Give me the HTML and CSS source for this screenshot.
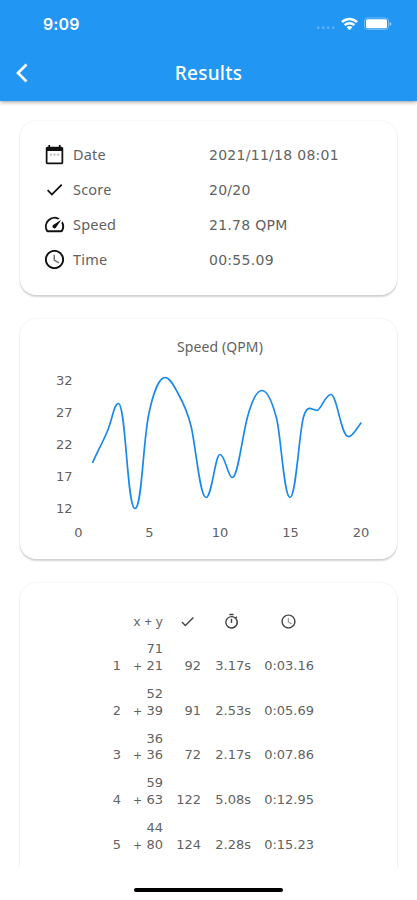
FILE: index.html
```html
<!DOCTYPE html>
<html lang="en">
<head>
<meta charset="utf-8">
<title>Results</title>
<link rel="stylesheet" href="styles.css">
</head>
<body>
<svg width="0" height="0" class="defs">
  <symbol id="check" viewBox="0 0 24 24"><path d="M9 16.17 4.83 12l-1.42 1.41L9 19 21 7l-1.41-1.41z"/></symbol>
  <symbol id="clock" viewBox="0 0 24 24"><path d="M11.99 2C6.47 2 2 6.48 2 12s4.47 10 9.99 10C17.52 22 22 17.52 22 12S17.52 2 11.99 2zM12 20c-4.42 0-8-3.58-8-8s3.58-8 8-8 8 3.58 8 8-3.58 8-8 8z"/><path d="M12.500 7H11v6l5.250 3.150.75-1.230-4.500-2.670z" opacity=".6"/></symbol>
</svg>
<header class="header">
  <div class="status">
    <span class="clock">9:09</span>
    <svg class="status-icons" width="80" height="16" viewBox="0 0 80 16">
      <g fill="#fff" opacity=".3"><rect x="3" y="10.500" width="2.500" height="2.500" rx="1"/><rect x="8" y="10.500" width="2.500" height="2.500" rx="1"/><rect x="13" y="10.500" width="2.500" height="2.500" rx="1"/><rect x="18" y="10.500" width="2.500" height="2.500" rx="1"/></g>
      <g fill="none" stroke="#fff" stroke-width="2.500"><path d="M28 6.200a10.400 10.400 0 0 1 15 0"/><path d="M30.700 9.200a6.800 6.800 0 0 1 9.600 0"/></g>
      <path d="M32.700 11.200a3.800 3.800 0 0 1 5.600 0L35.500 14.200z" fill="#fff"/>
      <rect x="50.500" y="2" width="24" height="11.500" rx="3" fill="none" stroke="#fff" opacity=".35"/>
      <rect x="52" y="3.300" width="21" height="9" rx="1.500" fill="#fff"/>
      <path d="M75.500 6v4q2-.5 2-2t-2-2" fill="#fff" opacity=".5"/>
    </svg>
  </div>
  <div class="bar">
    <svg class="back" width="14" height="22" viewBox="0 0 14 22"><path d="M12.500 2.500 4 11l8.500 8.500" fill="none" stroke="#fff" stroke-width="2.700"/></svg>
    <h1>Results</h1>
  </div>
</header>
<main class="content">
  <section class="card summary">
    <div class="row"><svg viewBox="0 0 24 24"><path d="M20 3h-1V1h-2v2H7V1H5v2H4c-1.100 0-2 .9-2 2v16c0 1.100.9 2 2 2h16c1.100 0 2-.9 2-2V5c0-1.100-.9-2-2-2zm0 18H4V8h16z"/><path d="M7 11h2v2H7zm4 0h2v2h-2zm4 0h2v2h-2z" opacity=".35"/></svg><span>Date</span><b>2021/11/18 08:01</b></div>
    <div class="row"><svg viewBox="0 0 24 24"><use href="#check"/></svg><span>Score</span><b>20/20</b></div>
    <div class="row"><svg viewBox="0 0 24 24" class="wide"><path d="m20.380 8.570-1.230 1.850a8 8 0 0 1-.22 7.580H5.070A8 8 0 0 1 15.580 6.850l1.850-1.230A10 10 0 0 0 3.350 19a2 2 0 0 0 1.720 1h13.850a2 2 0 0 0 1.740-1 10 10 0 0 0-.27-10.440zM10.590 15.410a2 2 0 0 0 2.830 0l5.660-8.490-8.490 5.660a2 2 0 0 0 0 2.830z"/></svg><span>Speed</span><b>21.78 QPM</b></div>
    <div class="row"><svg viewBox="0 0 24 24" class="wide"><use href="#clock"/></svg><span>Time</span><b>00:55.09</b></div>
  </section>
  <section class="card chart">
    <h2>Speed (QPM)</h2>
    <svg width="377" height="190" viewBox="20 360 377 190">
      <g class="axis" text-anchor="end"><text x="72.500" y="385">32</text><text x="72.500" y="417">27</text><text x="72.500" y="449">22</text><text x="72.500" y="481">17</text><text x="72.500" y="513">12</text></g>
      <g class="axis" text-anchor="middle"><text x="78.500" y="537">0</text><text x="149.500" y="537">5</text><text x="220" y="537">10</text><text x="290.500" y="537">15</text><text x="361" y="537">20</text></g>
      <path class="line" d="M92.500 463C98 450 103 442 107 432C112 421 114 403.500 118.300 403.500C126 403.500 127 508.500 135 508.500C142 508.500 143 440 149 413C153 394 159 377.500 165 377.500C170 377.500 174 386 177.500 392.500C183 402 188 413 191.500 428C196 449 200 497.500 206 497.500C212 497.500 215 454.500 220 454.500C225 454.500 228 477.500 232.300 477.500C238 477.500 242 437 247.500 417C251 404 256 390.500 262 390.500C268 390.500 273 405 276.500 418C281 436 284 497.500 290 497.500C296 497.500 299 433 303.500 417C305.500 410 307 408.300 309.500 408.300C312 408.300 314 410.300 317 410.300C321 410.300 325 394.500 331 394.500C337 394.500 341 436.700 348.500 436.700C353 436.700 357 428 361.300 422.500"/>
    </svg>
  </section>
  <section class="card results">
    <div class="table">
      <div class="line-row head"><i></i><span>x + y</span><span><svg viewBox="0 0 24 24"><use href="#check"/></svg></span><span><svg viewBox="0 0 24 24"><path d="M9 1h6v2H9zM11 8h2v6h-2zM19 7.400l1.400-1.400L19 4.600 17.500 6A9 9 0 1 0 19 7.400zM12 20a7 7 0 1 1 0-14 7 7 0 0 1 0 14z"/></svg></span><span><svg viewBox="0 0 24 24"><use href="#clock"/></svg></span></div>
      <div class="line-row"><i>1</i><span>71<br><em>+</em> 21</span><span>92</span><span>3.17s</span><span>0:03.16</span></div>
      <div class="line-row"><i>2</i><span>52<br><em>+</em> 39</span><span>91</span><span>2.53s</span><span>0:05.69</span></div>
      <div class="line-row"><i>3</i><span>36<br><em>+</em> 36</span><span>72</span><span>2.17s</span><span>0:07.86</span></div>
      <div class="line-row"><i>4</i><span>59<br><em>+</em> 63</span><span>122</span><span>5.08s</span><span>0:12.95</span></div>
      <div class="line-row"><i>5</i><span>44<br><em>+</em> 80</span><span>124</span><span>2.28s</span><span>0:15.23</span></div>
    </div>
  </section>
</main>
<footer class="home"><div></div></footer>
</body>
</html>
```
FILE: styles.css
```css
* { box-sizing: border-box; }
body { margin: 0; width: 417px; height: 900px; overflow: hidden; display: flex; flex-direction: column; background: #fff; color: #626262; font: 13px/16.500px "DejaVu Sans", sans-serif; }
.defs { display: none; }
.header { flex: none; height: 100.500px; background: #2196f3; color: #fff; box-shadow: 0 1px 4px rgba(0,0,0,.42); z-index: 1; }
.status { height: 46px; display: flex; justify-content: space-between; align-items: center; padding: 2px 23px 0 43px; }
.clock { font: 600 16px/20px Inter, sans-serif; letter-spacing: .1px; }
.bar { height: 54px; display: grid; grid-template-columns: 60px 1fr 60px; align-items: center; }
.back { margin-left: 14px; }
h1 { margin: 0; text-align: center; font: 500 19px/24px "Noto Sans", sans-serif; letter-spacing: .25px; }
.content { flex: none; height: 766.500px; overflow: hidden; padding: 20.500px 20px 0; display: flex; flex-direction: column; gap: 24px; }
.card { flex: none; border-radius: 16px; background: #fff; box-shadow: 0 2px 1.500px rgba(0,0,0,.16), 0 0 2px rgba(0,0,0,.1); }
.summary { height: 174px; padding: 16px 24px; }
.row { height: 35px; display: grid; grid-template-columns: 29px 136px 1fr; align-items: center; }
.row svg { width: 21px; height: 21px; fill: #111; }
.row .wide { width: 23px; height: 23px; margin-left: -1px; }
.row span { font: 14.500px/18px "Noto Sans", sans-serif; letter-spacing: .2px; padding-bottom: 1.500px; }
.row b { font-weight: 400; font-size: 14px; letter-spacing: .28px; padding-top: 1px; }
.chart { height: 240px; padding-top: 19px; }
h2 { margin: 0; text-align: center; font: 14px/18px "Noto Sans", sans-serif; letter-spacing: .1px; padding-left: 23px; }
.chart svg { display: block; margin-top: 4px; }
.axis { fill: #626262; font-size: 13px; }
.line { fill: none; stroke: #1a89ed; stroke-width: 1.700; }
.results { height: 400px; padding: 28px 83px 0 87px; }
.table { display: flex; flex-direction: column; gap: 10.700px; }
.line-row { display: grid; grid-template-columns: 14px 42px 38px 50px 63px; align-items: end; height: 34px; text-align: right; }
.line-row i { font-style: normal; }
.line-row em { font-style: normal; font-size: 11px; line-height: 0; }
.head { height: 20px; margin-bottom: -1.300px; align-items: center; font-family: "Noto Sans", sans-serif; letter-spacing: .35px; }
.head svg { width: 17px; height: 17px; fill: #444; display: block; margin: auto; }
.head span:nth-child(3) svg { margin-right: 5px; }
.head span:nth-child(4) svg { margin-right: 11px; }
.head span:nth-child(5) svg { margin-right: 17px; }
.home { height: 33px; display: flex; justify-content: center; padding-top: 21px; }
.home div { width: 149px; height: 4px; border-radius: 2px; background: #000; }
```
